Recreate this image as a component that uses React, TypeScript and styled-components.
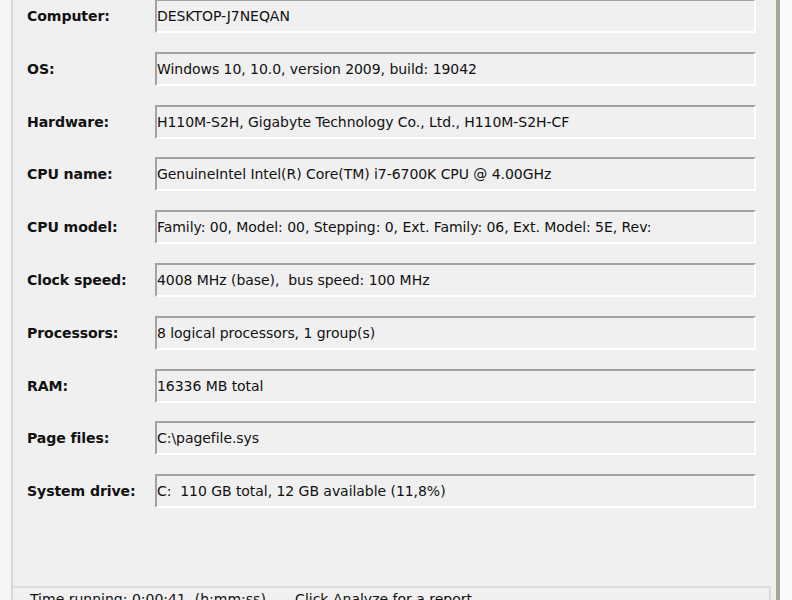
import React from "react";
import styled, { createGlobalStyle } from "styled-components";

const Global = createGlobalStyle`
  html, body {
    margin: 0;
    padding: 0;
    background: #f6f6f6;
    overflow: hidden;
  }
  #root {
    width: 792px;
    height: 600px;
  }
`;

const Frame = styled.div`
  display: flex;
  width: 792px;
  height: 600px;
  overflow: hidden;
  font-family: "DejaVu Sans", Tahoma, Verdana, sans-serif;
  color: #111;
`;

const LeftGutter = styled.div`
  width: 11px;
  flex: none;
  background: #f5f5f5;
  border-right: 2px solid #d6d6d6;
`;

const Panel = styled.div`
  flex: 1;
  display: flex;
  flex-direction: column;
  background: #f0f0f0;
`;

const RightEdge = styled.div`
  width: 12px;
  flex: none;
  background: #fafafa;
  border-left: 4px solid #a3aa9a;
`;

const Form = styled.div`
  display: grid;
  grid-template-columns: 128px 601px;
  grid-auto-rows: 52.8px;
  padding-left: 14px;
  margin-top: -1px;
  flex: 1;
  align-content: start;
`;

const Label = styled.div`
  height: 34px;
  display: flex;
  align-items: center;
  font-weight: bold;
  font-size: 14.1px;
  letter-spacing: -0.1px;
  white-space: nowrap;
`;

const Field = styled.div`
  box-sizing: border-box;
  height: 34px;
  display: flex;
  align-items: center;
  padding-left: 0;
  white-space: pre;
  overflow: hidden;
  font-size: 14px;
  letter-spacing: -0.05px;
  background: #f0f0f0;
  border-top: 2px solid #a2a2a2;
  border-left: 2px solid #a2a2a2;
  border-bottom: 2px solid #ffffff;
  border-right: 2px solid #ffffff;
`;

const StatusBar = styled.div`
  height: 12px;
  flex: none;
  display: flex;
  border-top: 2px solid #dcdcdc;
  margin-right: 5px;
`;

const StatusText = styled.div`
  flex: 1;
  padding: 3px 0 0 17px;
  font-size: 14px;
  white-space: pre;
  border-right: 2px solid #dadada;
`;

const rows: [string, string][] = [
  ["Computer:", "DESKTOP-J7NEQAN"],
  ["OS:", "Windows 10, 10.0, version 2009, build: 19042"],
  ["Hardware:", "H110M-S2H, Gigabyte Technology Co., Ltd., H110M-S2H-CF"],
  ["CPU name:", "GenuineIntel Intel(R) Core(TM) i7-6700K CPU @ 4.00GHz"],
  ["CPU model:", "Family: 00, Model: 00, Stepping: 0, Ext. Family: 06, Ext. Model: 5E, Rev:"],
  ["Clock speed:", "4008 MHz (base),  bus speed: 100 MHz"],
  ["Processors:", "8 logical processors, 1 group(s)"],
  ["RAM:", "16336 MB total"],
  ["Page files:", "C:\\pagefile.sys"],
  ["System drive:", "C:  110 GB total, 12 GB available (11,8%)"],
];

export default function App() {
  return (
    <>
      <Global />
      <Frame>
        <LeftGutter />
        <Panel>
          <Form>
            {rows.map(([label, value]) => (
              <React.Fragment key={label}>
                <Label>{label}</Label>
                <Field>{value}</Field>
              </React.Fragment>
            ))}
          </Form>
          <StatusBar>
            <StatusText>
              {"Time running: 0:00:41  (h:mm:ss)   \u2013  Click Analyze for a report"}
            </StatusText>
          </StatusBar>
        </Panel>
        <RightEdge />
      </Frame>
    </>
  );
}
